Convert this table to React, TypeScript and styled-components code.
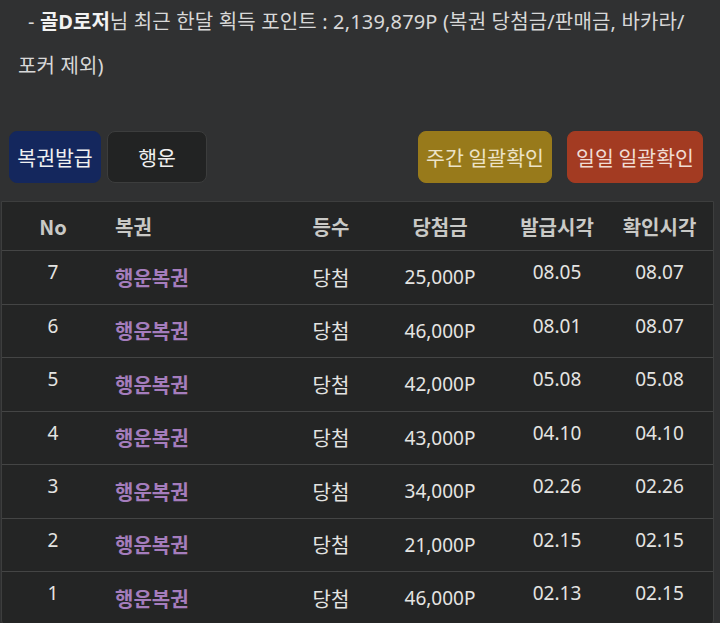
import React from "react";
import styled, { createGlobalStyle } from "styled-components";

const Global = createGlobalStyle`
  html, body { margin: 0; padding: 0; background: #303132; }
  body { font-family: "Noto Sans", "Noto Sans CJK KR", sans-serif; color: #e6e6e6; }
`;

const Page = styled.div`
  width: 720px;
  height: 623px;
  overflow: hidden;
  background: #303132;
  display: flex;
  flex-direction: column;
`;

const Notice = styled.p`
  margin: 0;
  padding: 0 16px 0 18px;
  font-family: "Noto Sans", "Noto Sans CJK KR", sans-serif;
  font-size: 20px;
  line-height: 44px;
  letter-spacing: 0.16px;
  color: #d8d8d8;
  white-space: pre-wrap;
  & b { color: #f2f2f2; font-weight: 700; letter-spacing: 0; }
`;

const Lead = styled.span`
  padding-left: 10px;
`;

const Toolbar = styled.div`
  display: flex;
  align-items: center;
  gap: 6px;
  padding: 0 17px 0 9px;
  margin-top: 43px;
  height: 52px;
`;

const Spacer = styled.div`
  flex: 1;
`;

const Btn = styled.button<{ $bg: string; $border?: string; $w: number; $color?: string; $ml?: number }>`
  width: ${(p) => p.$w}px;
  height: 52px;
  margin-left: ${(p) => p.$ml ?? 0}px;
  border-radius: 8px;
  background: ${(p) => p.$bg};
  border: 1px solid ${(p) => p.$border ?? p.$bg};
  color: ${(p) => p.$color ?? "#f0f0f0"};
  font-family: "Noto Sans CJK KR", sans-serif;
  font-size: 20.5px;
  padding: 0;
  white-space: nowrap;
`;

const Table = styled.div`
  margin: 18px 6px 0 1px;
  border: 1px solid #3d3e3e;
  border-radius: 0 0 6px 6px;
  background: #242525;
  flex: 1;
`;

const Row = styled.div<{ $h: number; $last?: boolean }>`
  display: grid;
  grid-template-columns: 102px 186px 82px 136px 98px 1fr;
  height: ${(p) => p.$h}px;
  align-items: center;
  border-bottom: ${(p) => (p.$last ? "none" : "1px solid #444545")};
`;

const Head = styled.div<{ $left?: boolean }>`
  text-align: ${(p) => (p.$left ? "left" : "center")};
  padding-left: ${(p) => (p.$left ? 11 : 0)}px;
  font-family: "Noto Sans CJK KR", "Noto Sans", sans-serif;
  font-weight: 700;
  font-size: 20px;
  color: #c9c9c6;
`;

const Cell = styled.div<{ $raise?: boolean }>`
  text-align: center;
  font-family: "Noto Sans", "Noto Sans CJK KR", sans-serif;
  font-size: 19px;
  color: #e4e4e2;
  transform: translateY(${(p) => (p.$raise ? -5 : 0)}px);
`;

const Lotto = styled.div`
  padding-left: 11px;
  font-family: "Noto Sans CJK KR", sans-serif;
  font-weight: 700;
  font-size: 20px;
  color: #a57dbd;
`;

const Rank = styled.div`
  text-align: center;
  font-family: "Noto Sans CJK KR", sans-serif;
  font-size: 20px;
  color: #e4e4e2;
`;

const rows = [
  { no: 7, amt: "25,000P", issued: "08.05", checked: "08.07" },
  { no: 6, amt: "46,000P", issued: "08.01", checked: "08.07" },
  { no: 5, amt: "42,000P", issued: "05.08", checked: "05.08" },
  { no: 4, amt: "43,000P", issued: "04.10", checked: "04.10" },
  { no: 3, amt: "34,000P", issued: "02.26", checked: "02.26" },
  { no: 2, amt: "21,000P", issued: "02.15", checked: "02.15" },
  { no: 1, amt: "46,000P", issued: "02.13", checked: "02.15" },
];

export default function App() {
  return (
    <Page>
      <Global />
      <Notice>
        <Lead>- </Lead>
        <b>골D로저</b>
        님 최근 한달 획득 포인트 : 2,139,879P (복권 당첨금/판매금, 바카라/
        <br />
        포커 제외)
      </Notice>
      <Toolbar>
        <Btn $bg="#14275d" $w={92}>복권발급</Btn>
        <Btn $bg="#222323" $border="#3c3d3d" $w={100}>행운</Btn>
        <Spacer />
        <Btn $bg="#987a1b" $w={134} $color="#ece3c8">주간 일괄확인</Btn>
        <Btn $bg="#a33b22" $w={136} $ml={9} $color="#f0dcd4">일일 일괄확인</Btn>
      </Toolbar>
      <Table>
        <Row $h={48}>
          <Head>No</Head>
          <Head $left>복권</Head>
          <Head>등수</Head>
          <Head>당첨금</Head>
          <Head>발급시각</Head>
          <Head>확인시각</Head>
        </Row>
        {rows.map((r, i) => (
          <Row key={r.no} $h={52.5} $last={i === rows.length - 1}>
            <Cell $raise>{r.no}</Cell>
            <Lotto>행운복권</Lotto>
            <Rank>당첨</Rank>
            <Cell>{r.amt}</Cell>
            <Cell $raise>{r.issued}</Cell>
            <Cell $raise>{r.checked}</Cell>
          </Row>
        ))}
      </Table>
    </Page>
  );
}
